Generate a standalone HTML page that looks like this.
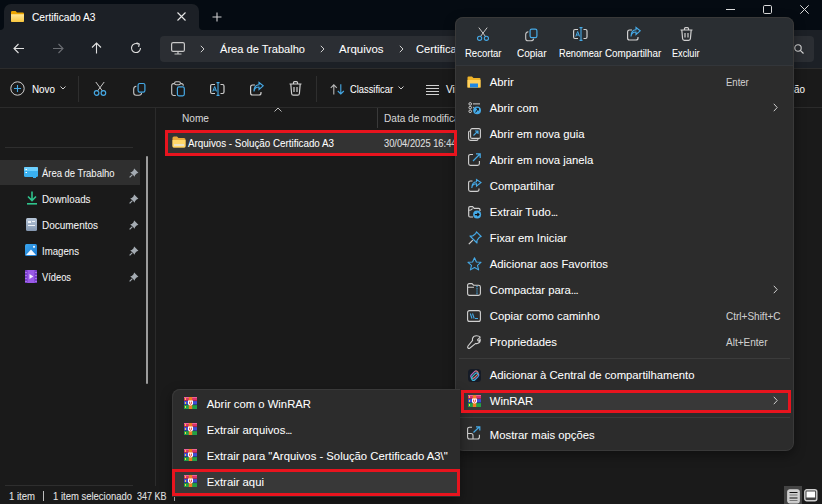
<!DOCTYPE html>
<html><head><meta charset="utf-8"><style>
html,body{margin:0;padding:0;width:822px;height:504px;overflow:hidden;background:#1a1a1a;}
body{position:relative;font-family:'Liberation Sans', sans-serif;}
.t{position:absolute;line-height:0;white-space:nowrap;-webkit-text-stroke:0.05px currentColor;}
svg{overflow:visible}
</style></head><body>
<div style="position:absolute;left:0px;top:0px;width:822px;height:30px;background:#050b12;"></div>
<div style="position:absolute;left:0px;top:25px;width:822px;height:5px;background:#1c2026;"></div>
<div style="position:absolute;left:0px;top:0px;width:4px;height:30px;background:#050b12;border-radius:0 0 4px 0"></div>
<div style="position:absolute;left:199px;top:0px;width:623px;height:30px;background:#050b12;border-radius:0 0 0 4px"></div>
<div style="position:absolute;left:4px;top:4px;width:195px;height:27px;background:#1c2026;border-radius:7px 7px 0 0"></div>
<div style="position:absolute;left:0px;top:30px;width:822px;height:39px;background:#1c2026;"></div>
<div style="position:absolute;left:0px;top:68px;width:822px;height:1px;background:#2c2c2c;"></div>
<div style="position:absolute;left:0px;top:69px;width:822px;height:38px;background:#1a1a1a;"></div>
<div style="position:absolute;left:0px;top:107px;width:822px;height:1px;background:#2b2b2b;"></div>
<svg style="position:absolute;left:11px;top:11px" width="13" height="11" viewBox="0 0 13 11"><defs><linearGradient id="fy" x1="0" y1="0" x2="0" y2="1"><stop offset="0" stop-color="#ffe79a"/><stop offset="1" stop-color="#f9c73e"/></linearGradient></defs><path d="M0 1.2 Q0 0 1.2 0 H4.6 L6 1.5 H11.8 Q13 1.5 13 2.7 V9.8 Q13 11 11.8 11 H1.2 Q0 11 0 9.8 Z" fill="#eaa400"/><path d="M0 3.2 H13 V9.8 Q13 11 11.8 11 H1.2 Q0 11 0 9.8 Z" fill="url(#fy)"/></svg>
<div class="t" style="left:32px;top:18.00px;font-size:10.3px;color:#ffffff;transform:scaleX(0.9905);transform-origin:0 0;">Certificado A3</div>
<svg style="position:absolute;left:177px;top:12px" width="9" height="9" viewBox="0 0 9 9"><path d="M0.5 0.5 L8.5 8.5 M8.5 0.5 L0.5 8.5" stroke="#e6e6e6" stroke-width="1.1"/></svg>
<svg style="position:absolute;left:212px;top:12px" width="10" height="10" viewBox="0 0 10 10"><path d="M5 0.5 V9.5 M0.5 5 H9.5" stroke="#d0d0d0" stroke-width="1.1"/></svg>
<svg style="position:absolute;left:726px;top:9px" width="9" height="2" viewBox="0 0 9 2"><path d="M0 0.5 H9" stroke="#dcdcdc" stroke-width="1"/></svg>
<svg style="position:absolute;left:763px;top:5px" width="9" height="9" viewBox="0 0 9 9"><rect x="0.5" y="0.5" width="8" height="8" rx="1.2" fill="none" stroke="#dcdcdc" stroke-width="1"/></svg>
<svg style="position:absolute;left:800px;top:5px" width="9" height="9" viewBox="0 0 9 9"><path d="M0.3 0.3 L8.7 8.7 M8.7 0.3 L0.3 8.7" stroke="#dcdcdc" stroke-width="1"/></svg>
<svg style="position:absolute;left:13px;top:43px" width="12" height="11" viewBox="0 0 12 11"><path d="M1 5.5 H11 M5.5 1 L1 5.5 L5.5 10" fill="none" stroke="#e0e0e0" stroke-width="1.1"/></svg>
<svg style="position:absolute;left:52px;top:43px" width="12" height="11" viewBox="0 0 12 11"><g transform="translate(12,0) scale(-1,1)"><path d="M1 5.5 H11 M5.5 1 L1 5.5 L5.5 10" fill="none" stroke="#6a6d72" stroke-width="1.1"/></g></svg>
<svg style="position:absolute;left:91px;top:42px" width="11" height="12" viewBox="0 0 11 12"><path d="M5.5 1 V11.5 M1 5.5 L5.5 1 L10 5.5" fill="none" stroke="#e0e0e0" stroke-width="1.1"/></svg>
<svg style="position:absolute;left:130px;top:42px" width="12" height="12" viewBox="0 0 12 12"><path d="M10.5 6 A4.5 4.5 0 1 1 8.5 2.3" fill="none" stroke="#e0e0e0" stroke-width="1.1"/><path d="M6.5 0.8 L9.3 2 L8.6 4.9" fill="none" stroke="#e0e0e0" stroke-width="1.1"/></svg>
<div style="position:absolute;left:160px;top:36px;width:640px;height:26px;background:#2b2e33;border-radius:4px"></div>
<div style="position:absolute;left:780px;top:36px;width:34px;height:26px;background:#2b2e33;border-radius:4px"></div>
<svg style="position:absolute;left:794px;top:44px" width="10" height="10" viewBox="0 0 10 10"><circle cx="4" cy="4" r="3.2" fill="none" stroke="#d8d8d8" stroke-width="1.1"/><path d="M6.3 6.3 L9.5 9.5" stroke="#d8d8d8" stroke-width="1.1"/></svg>
<svg style="position:absolute;left:171px;top:42px" width="14" height="13" viewBox="0 0 14 13"><rect x="0.6" y="0.6" width="12.8" height="8.8" rx="1.5" fill="none" stroke="#c8c8c8" stroke-width="1.2"/><path d="M7 9.5 V11.5 M3.5 12 H10.5" stroke="#c8c8c8" stroke-width="1.2"/></svg>
<svg style="position:absolute;left:200px;top:45px" width="5" height="8" viewBox="0 0 5 8"><path d="M0.8 0.8 L4 4 L0.8 7.2" fill="none" stroke="#cfcfcf" stroke-width="1"/></svg>
<div class="t" style="left:220px;top:49.12px;font-size:11.1px;color:#ffffff;transform:scaleX(0.9985);transform-origin:0 0;">Área de Trabalho</div>
<svg style="position:absolute;left:399px;top:45px" width="5" height="8" viewBox="0 0 5 8"><path d="M0.8 0.8 L4 4 L0.8 7.2" fill="none" stroke="#cfcfcf" stroke-width="1"/></svg>
<div class="t" style="left:338.5px;top:49.12px;font-size:11.1px;color:#ffffff;transform:scaleX(1.0308);transform-origin:0 0;">Arquivos</div>
<svg style="position:absolute;left:320px;top:45px" width="5" height="8" viewBox="0 0 5 8"><path d="M0.8 0.8 L4 4 L0.8 7.2" fill="none" stroke="#cfcfcf" stroke-width="1"/></svg>
<div class="t" style="left:416px;top:49.12px;font-size:11.1px;color:#ffffff;">Certificado A3</div>
<svg style="position:absolute;left:10px;top:81px" width="15" height="15" viewBox="0 0 15 15"><circle cx="7.5" cy="7.5" r="6.7" fill="none" stroke="#d0d0d0" stroke-width="1"/><path d="M7.5 4 V11 M4 7.5 H11" stroke="#45a9e6" stroke-width="1.1"/></svg>
<div class="t" style="left:31.5px;top:90.16px;font-size:10.4px;color:#ffffff;transform:scaleX(0.9478);transform-origin:0 0;">Novo</div>
<svg style="position:absolute;left:60px;top:86px" width="6" height="4" viewBox="0 0 6 4"><path d="M0.5 0.5 L3 3 L5.5 0.5" fill="none" stroke="#cfcfcf" stroke-width="1"/></svg>
<div style="position:absolute;left:78px;top:76px;width:1px;height:26px;background:#2e2e2e;"></div>
<svg style="position:absolute;left:93px;top:81px" width="14" height="15" viewBox="0 0 14 15"><path d="M2.8 1 L9.6 10.2 M11.2 1 L4.4 10.2" stroke="#c8c8c8" stroke-width="1"/><circle cx="3.6" cy="12" r="2.3" fill="none" stroke="#45a9e6" stroke-width="1.2"/><circle cx="10.4" cy="12" r="2.3" fill="none" stroke="#45a9e6" stroke-width="1.2"/></svg>
<svg style="position:absolute;left:133px;top:82px" width="13" height="14" viewBox="0 0 13 14"><rect x="5.1" y="1.5" width="6.8" height="8.6" rx="1.6" fill="none" stroke="#45a9e6" stroke-width="1.2"/><path d="M3.4 4.2 Q0.7 4.5 0.7 7 V10.8 Q0.7 13.2 3.2 13.2 H6 Q8.4 13.2 8.6 11" fill="none" stroke="#c8c8c8" stroke-width="1.1"/></svg>
<svg style="position:absolute;left:171px;top:81px" width="14" height="16" viewBox="0 0 14 16"><path d="M3.2 2.6 H2.6 Q0.7 2.6 0.7 4.6 V12.6 Q0.7 14.5 2.6 14.5 H4.8 M9.8 2.6 H10.4 Q12.3 2.6 12.3 4.6 V4.8" fill="none" stroke="#c8c8c8" stroke-width="1.1"/><rect x="3.6" y="0.7" width="5.8" height="3" rx="1.4" fill="none" stroke="#c8c8c8" stroke-width="1.1"/><rect x="6.4" y="5.9" width="6.9" height="8.9" rx="1.5" fill="none" stroke="#45a9e6" stroke-width="1.2"/></svg>
<svg style="position:absolute;left:210px;top:82px" width="15" height="14" viewBox="0 0 15 14"><path d="M5 2.5 H2 Q0.6 2.5 0.6 4 V10 Q0.6 11.5 2 11.5 H5 M10.5 2.5 H12.5 Q14 2.5 14 4 V10 Q14 11.5 12.5 11.5 H10.5" fill="none" stroke="#d0d0d0" stroke-width="1.2"/><path d="M8 0.5 V13.5 M6.5 0.6 H9.5 M6.5 13.4 H9.5" stroke="#45a9e6" stroke-width="1.1"/><path d="M2.8 9.5 L4.7 4.5 L6.6 9.5 M3.5 8 H6" fill="none" stroke="#45a9e6" stroke-width="1"/></svg>
<svg style="position:absolute;left:250px;top:82px" width="14" height="14" viewBox="0 0 14 14"><path d="M5 3 H2.5 Q0.6 3 0.6 5 V11 Q0.6 13 2.5 13 H9 Q11 13 11 11 V10" fill="none" stroke="#d0d0d0" stroke-width="1.2"/><path d="M4 9.5 Q4.5 5 9 5 V7.5 L13.2 3.8 L9 0.5 V2.8 Q4 3 4 9.5 Z" fill="none" stroke="#45a9e6" stroke-width="1.1"/></svg>
<svg style="position:absolute;left:289px;top:81px" width="13" height="15" viewBox="0 0 13 15"><path d="M0.5 3 H12.5 M4.5 3 V1.5 Q4.5 0.6 5.5 0.6 H7.5 Q8.5 0.6 8.5 1.5 V3 M1.8 3 L2.6 12.5 Q2.8 14.2 4.4 14.2 H8.6 Q10.2 14.2 10.4 12.5 L11.2 3 M5 6 V11 M8 6 V11" fill="none" stroke="#d0d0d0" stroke-width="1.2"/></svg>
<div style="position:absolute;left:316px;top:76px;width:1px;height:26px;background:#2e2e2e;"></div>
<svg style="position:absolute;left:330px;top:84px" width="15" height="11" viewBox="0 0 15 11"><path d="M3.8 10.5 V0.8 M0.8 3.8 L3.8 0.8 L6.8 3.8" fill="none" stroke="#b8b8b8" stroke-width="1.1"/><path d="M10.8 0.3 V10 M7.8 7 L10.8 10 L13.8 7" fill="none" stroke="#45a9e6" stroke-width="1.1"/></svg>
<div class="t" style="left:350px;top:90.16px;font-size:10.4px;color:#ffffff;transform:scaleX(0.8973);transform-origin:0 0;">Classificar</div>
<svg style="position:absolute;left:398px;top:86px" width="6" height="4" viewBox="0 0 6 4"><path d="M0.5 0.5 L3 3 L5.5 0.5" fill="none" stroke="#cfcfcf" stroke-width="1"/></svg>
<svg style="position:absolute;left:426px;top:84px" width="13" height="11" viewBox="0 0 13 11"><path d="M0 1.5 H13 M0 4.5 H13 M0 7.5 H13 M0 10.5 H13" stroke="#d0d0d0" stroke-width="1"/></svg>
<div class="t" style="left:445.5px;top:90.16px;font-size:10.4px;color:#ffffff;transform:scaleX(0.9808);transform-origin:0 0;">Visualizar</div>
<div class="t" style="left:794px;top:90.16px;font-size:10.4px;color:#ffffff;transform:scaleX(0.9514);transform-origin:0 0;">ão</div>
<div style="position:absolute;left:5px;top:147px;width:128px;height:1px;background:#2e2e2e;"></div>
<div style="position:absolute;left:0px;top:160px;width:140px;height:25px;background:#2f2f2f;"></div>
<div class="t" style="left:41.5px;top:173.70px;font-size:10.3px;color:#f4f4f4;transform:scaleX(0.9177);transform-origin:0 0;">Área de Trabalho</div>
<svg style="position:absolute;left:129px;top:168px" width="10" height="10" viewBox="0 0 10 10"><path d="M5.2 0.6 L9.4 4.8 L7.6 5.6 L6 7.2 L5.8 8.8 L1.2 4.2 L2.8 4 L4.4 2.4 Z" fill="#a4abb2"/><path d="M3.2 6.8 L0.6 9.4" stroke="#a4abb2" stroke-width="1.2"/></svg>
<div class="t" style="left:41.5px;top:199.70px;font-size:10.3px;color:#f4f4f4;transform:scaleX(0.9519);transform-origin:0 0;">Downloads</div>
<svg style="position:absolute;left:129px;top:194px" width="10" height="10" viewBox="0 0 10 10"><path d="M5.2 0.6 L9.4 4.8 L7.6 5.6 L6 7.2 L5.8 8.8 L1.2 4.2 L2.8 4 L4.4 2.4 Z" fill="#a4abb2"/><path d="M3.2 6.8 L0.6 9.4" stroke="#a4abb2" stroke-width="1.2"/></svg>
<div class="t" style="left:41.5px;top:225.70px;font-size:10.3px;color:#f4f4f4;transform:scaleX(0.9686);transform-origin:0 0;">Documentos</div>
<svg style="position:absolute;left:129px;top:220px" width="10" height="10" viewBox="0 0 10 10"><path d="M5.2 0.6 L9.4 4.8 L7.6 5.6 L6 7.2 L5.8 8.8 L1.2 4.2 L2.8 4 L4.4 2.4 Z" fill="#a4abb2"/><path d="M3.2 6.8 L0.6 9.4" stroke="#a4abb2" stroke-width="1.2"/></svg>
<div class="t" style="left:41.5px;top:251.70px;font-size:10.3px;color:#f4f4f4;transform:scaleX(0.9367);transform-origin:0 0;">Imagens</div>
<svg style="position:absolute;left:129px;top:246px" width="10" height="10" viewBox="0 0 10 10"><path d="M5.2 0.6 L9.4 4.8 L7.6 5.6 L6 7.2 L5.8 8.8 L1.2 4.2 L2.8 4 L4.4 2.4 Z" fill="#a4abb2"/><path d="M3.2 6.8 L0.6 9.4" stroke="#a4abb2" stroke-width="1.2"/></svg>
<div class="t" style="left:41.5px;top:277.69px;font-size:10.3px;color:#f4f4f4;transform:scaleX(0.9045);transform-origin:0 0;">Vídeos</div>
<svg style="position:absolute;left:129px;top:272px" width="10" height="10" viewBox="0 0 10 10"><path d="M5.2 0.6 L9.4 4.8 L7.6 5.6 L6 7.2 L5.8 8.8 L1.2 4.2 L2.8 4 L4.4 2.4 Z" fill="#a4abb2"/><path d="M3.2 6.8 L0.6 9.4" stroke="#a4abb2" stroke-width="1.2"/></svg>
<svg style="position:absolute;left:24px;top:167px" width="14" height="11" viewBox="0 0 14 11"><rect x="0" y="0" width="14" height="10" rx="1.5" fill="#3ab0f0"/><rect x="0" y="0" width="14" height="4" rx="1" fill="#6cd0ff"/><rect x="1.5" y="2" width="1.5" height="1" fill="#fff"/><rect x="1.5" y="5" width="1.5" height="1" fill="#fff"/><rect x="9" y="10" width="3" height="1" fill="#3ab0f0"/></svg>
<svg style="position:absolute;left:26px;top:191px" width="12" height="14" viewBox="0 0 12 14"><path d="M6 0.5 V9 M2 5.5 L6 9.5 L10 5.5" fill="none" stroke="#2fc48d" stroke-width="1.6"/><path d="M1 12.8 H11" stroke="#2fc48d" stroke-width="1.6"/></svg>
<svg style="position:absolute;left:26px;top:218px" width="11" height="13" viewBox="0 0 11 13"><defs><linearGradient id="dg" x1="0" y1="0" x2="0" y2="1"><stop offset="0" stop-color="#b7c6d8"/><stop offset="1" stop-color="#8497b0"/></linearGradient></defs><rect x="0" y="0" width="11" height="13" rx="1.5" fill="url(#dg)"/><rect x="2" y="3" width="3" height="2" fill="#eef2f7"/><path d="M2 7.5 H9 M6 3.5 H9" stroke="#eef2f7" stroke-width="1"/></svg>
<svg style="position:absolute;left:25px;top:244px" width="12" height="12" viewBox="0 0 12 12"><defs><linearGradient id="ig" x1="0" y1="0" x2="1" y2="1"><stop offset="0" stop-color="#3aa6ee"/><stop offset="1" stop-color="#1a78d0"/></linearGradient></defs><rect x="0" y="0" width="12" height="12" rx="1.5" fill="url(#ig)"/><path d="M1 11 L6 5.6 L11 11 Z" fill="#f2f8ff"/><circle cx="9" cy="2.8" r="1.1" fill="#e6f3ff"/></svg>
<svg style="position:absolute;left:25px;top:270px" width="12" height="13" viewBox="0 0 12 13"><rect x="0" y="0" width="12" height="13" rx="1.5" fill="#9a5ae8"/><rect x="0" y="0" width="2.6" height="13" rx="1" fill="#7a3ccc"/><rect x="9.4" y="0" width="2.6" height="13" rx="1" fill="#7a3ccc"/><path d="M1 2 V3 M1 5 V6 M1 8 V9 M1 11 V12 M11 2 V3 M11 5 V6 M11 8 V9 M11 11 V12" stroke="#d8c0ff" stroke-width="0.9"/><path d="M4.5 4 L8.3 6.5 L4.5 9 Z" fill="#f4eeff"/></svg>
<div style="position:absolute;left:146px;top:156px;width:2px;height:228px;background:#9c9c9c;border-radius:1px"></div>
<div style="position:absolute;left:155px;top:108px;width:1px;height:378px;background:#2b2b2b;"></div>
<div style="position:absolute;left:5px;top:485px;width:128px;height:1px;background:#2e2e2e;"></div>
<div class="t" style="left:9px;top:496.69px;font-size:10.3px;color:#e6e6e6;transform:scaleX(0.9270);transform-origin:0 0;">1 item</div>
<div style="position:absolute;left:43px;top:491px;width:1px;height:10px;background:#bdbdbd;"></div>
<div class="t" style="left:53px;top:496.69px;font-size:10.3px;color:#e6e6e6;transform:scaleX(0.9201);transform-origin:0 0;">1 item selecionado</div>
<div class="t" style="left:137px;top:496.69px;font-size:10.3px;color:#e6e6e6;transform:scaleX(0.8733);transform-origin:0 0;">347 KB</div>
<div style="position:absolute;left:174px;top:491px;width:1px;height:10px;background:#bdbdbd;"></div>
<div style="position:absolute;left:784px;top:486px;width:18px;height:18px;background:#444444;"></div>
<svg style="position:absolute;left:787px;top:489px" width="14" height="15" viewBox="0 0 14 15"><rect x="0.8" y="0.8" width="11.4" height="13" rx="2" fill="#cfcfcf" stroke="#cfcfcf" stroke-width="1.3"/><path d="M2.5 3.5 H10.5 M2.5 9 H10.5" stroke="#111" stroke-width="1"/><path d="M2.5 6 H10.5 M2.5 11.5 H10.5" stroke="#777" stroke-width="1"/></svg>
<svg style="position:absolute;left:804px;top:489px" width="14" height="13" viewBox="0 0 14 13"><rect x="0.8" y="0.8" width="12" height="11" rx="2" fill="#444" stroke="#cfcfcf" stroke-width="1.4"/><rect x="2.5" y="2.5" width="8.6" height="6" fill="#fff"/></svg>
<div class="t" style="left:181.5px;top:118.69px;font-size:10.3px;color:#d6d6d6;transform:scaleX(0.9829);transform-origin:0 0;">Nome</div>
<svg style="position:absolute;left:274px;top:107px" width="8" height="5" viewBox="0 0 8 5"><path d="M0.5 4.5 L4 1 L7.5 4.5" fill="none" stroke="#bdbdbd" stroke-width="1"/></svg>
<div style="position:absolute;left:377px;top:108px;width:1px;height:20px;background:#3a3a3a;"></div>
<div class="t" style="left:383.5px;top:118.69px;font-size:10.3px;color:#d6d6d6;transform:scaleX(0.9800);transform-origin:0 0;">Data de modificação</div>
<div style="position:absolute;left:167px;top:132px;width:288px;height:22px;background:#333333;"></div>
<svg style="position:absolute;left:172px;top:136px" width="14" height="12" viewBox="0 0 14 12"><path d="M0.5 2 Q0.5 0.5 2 0.5 H5 L6.5 2 H12 Q13.5 2 13.5 3.5 V10 Q13.5 11.5 12 11.5 H2 Q0.5 11.5 0.5 10 Z" fill="#e6a93a"/><path d="M0.5 4 H13.5 V10 Q13.5 11.5 12 11.5 H2 Q0.5 11.5 0.5 10 Z" fill="#ffd76a"/><rect x="2" y="8" width="10" height="2" fill="#e9e2c8"/></svg>
<div class="t" style="left:188px;top:144.16px;font-size:10.4px;color:#ffffff;transform:scaleX(0.9432);transform-origin:0 0;">Arquivos - Solução Certificado A3</div>
<div class="t" style="left:383.5px;top:144.16px;font-size:10.4px;color:#e0e0e0;transform:scaleX(0.8961);transform-origin:0 0;">30/04/2025 16:44</div>
<div style="position:absolute;left:455px;top:17px;width:339px;height:434px;background:#2c2c2c;border-radius:8px;box-shadow:0 4px 12px rgba(0,0,0,0.4);overflow:hidden"><div style="position:absolute;left:0;top:0;width:339px;height:48px;background:#2a2e32"></div><div style="position:absolute;left:0;top:48px;width:339px;height:1px;background:#33363a"></div><div style="position:absolute;left:0;top:0;width:337px;height:432px;border:1px solid #393939;border-radius:8px"></div></div>
<svg style="position:absolute;left:476px;top:27px" width="14" height="14" viewBox="0 0 14 14"><path d="M2.8 0.6 L9.6 9.6 M11.2 0.6 L4.4 9.6" stroke="#c8c8c8" stroke-width="1"/><circle cx="3.6" cy="11.3" r="2.1" fill="none" stroke="#45a9e6" stroke-width="1.1"/><circle cx="10.4" cy="11.3" r="2.1" fill="none" stroke="#45a9e6" stroke-width="1.1"/></svg>
<div class="t" style="left:465px;top:54.20px;font-size:10.3px;color:#ffffff;transform:scaleX(0.9244);transform-origin:0 0;">Recortar</div>
<svg style="position:absolute;left:525px;top:28px" width="13" height="14" viewBox="0 0 13 14"><rect x="5.1" y="1.1" width="6.8" height="8.6" rx="1.6" fill="none" stroke="#45a9e6" stroke-width="1.2"/><path d="M3.4 3.8 Q0.7 4.1 0.7 6.6 V10.4 Q0.7 12.8 3.2 12.8 H6 Q8.4 12.8 8.6 10.6" fill="none" stroke="#c8c8c8" stroke-width="1.1"/></svg>
<div class="t" style="left:517px;top:54.20px;font-size:10.3px;color:#ffffff;transform:scaleX(0.9722);transform-origin:0 0;">Copiar</div>
<svg style="position:absolute;left:573px;top:27px" width="15" height="14" viewBox="0 0 15 14"><path d="M5 2.5 H2 Q0.6 2.5 0.6 4 V10 Q0.6 11.5 2 11.5 H5 M10.5 2.5 H12.5 Q14 2.5 14 4 V10 Q14 11.5 12.5 11.5 H10.5" fill="none" stroke="#d0d0d0" stroke-width="1.2"/><path d="M8 0.5 V13.5 M6.5 0.6 H9.5 M6.5 13.4 H9.5" stroke="#45a9e6" stroke-width="1.1"/><path d="M2.8 9.5 L4.7 4.5 L6.6 9.5 M3.5 8 H6" fill="none" stroke="#45a9e6" stroke-width="1"/></svg>
<div class="t" style="left:558.7px;top:54.20px;font-size:10.3px;color:#ffffff;transform:scaleX(0.8944);transform-origin:0 0;">Renomear</div>
<svg style="position:absolute;left:627px;top:27px" width="14" height="14" viewBox="0 0 14 14"><path d="M5 3 H2.5 Q0.6 3 0.6 5 V11 Q0.6 13 2.5 13 H9 Q11 13 11 11 V10" fill="none" stroke="#d0d0d0" stroke-width="1.2"/><path d="M4 9.5 Q4.5 5 9 5 V7.5 L13.2 3.8 L9 0.5 V2.8 Q4 3 4 9.5 Z" fill="none" stroke="#45a9e6" stroke-width="1.1"/></svg>
<div class="t" style="left:604.8px;top:54.20px;font-size:10.3px;color:#ffffff;transform:scaleX(0.9533);transform-origin:0 0;">Compartilhar</div>
<svg style="position:absolute;left:680px;top:27px" width="13" height="14" viewBox="0 0 13 14"><path d="M0.5 3 H12.5 M4.5 3 V1.5 Q4.5 0.6 5.5 0.6 H7.5 Q8.5 0.6 8.5 1.5 V3 M1.8 3 L2.6 11.8 Q2.8 13.4 4.4 13.4 H8.6 Q10.2 13.4 10.4 11.8 L11.2 3 M5 6 V10.5 M8 6 V10.5" fill="none" stroke="#d0d0d0" stroke-width="1.2"/></svg>
<div class="t" style="left:672px;top:54.20px;font-size:10.3px;color:#ffffff;transform:scaleX(0.8898);transform-origin:0 0;">Excluir</div>
<div style="position:absolute;left:459px;top:358px;width:331px;height:1px;background:#3b3b3b;"></div>
<div style="position:absolute;left:459px;top:417px;width:331px;height:1px;background:#3b3b3b;"></div>
<div style="position:absolute;left:463px;top:392px;width:325px;height:20px;background:#383838;"></div>
<div class="t" style="left:489.8px;top:82.05px;font-size:11.3px;color:#ffffff;">Abrir</div>
<div class="t" style="left:726px;top:83.19px;font-size:10.3px;color:#cfcfcf;transform:scaleX(0.9259);transform-origin:0 0;">Enter</div>
<div class="t" style="left:489.8px;top:108.05px;font-size:11.3px;color:#ffffff;">Abrir com</div>
<svg style="position:absolute;left:773px;top:103px" width="5" height="9" viewBox="0 0 5 9"><path d="M0.8 0.8 L4.2 4.5 L0.8 8.2" fill="none" stroke="#cfcfcf" stroke-width="1"/></svg>
<div class="t" style="left:489.8px;top:134.04px;font-size:11.3px;color:#ffffff;">Abrir em nova guia</div>
<div class="t" style="left:489.8px;top:160.04px;font-size:11.3px;color:#ffffff;">Abrir em nova janela</div>
<div class="t" style="left:489.8px;top:186.04px;font-size:11.3px;color:#ffffff;">Compartilhar</div>
<div class="t" style="left:489.8px;top:212.04px;font-size:11.3px;color:#ffffff;">Extrair Tudo<span style="letter-spacing:-1px">...</span></div>
<div class="t" style="left:489.8px;top:238.04px;font-size:11.3px;color:#ffffff;">Fixar em Iniciar</div>
<div class="t" style="left:489.8px;top:264.05px;font-size:11.3px;color:#ffffff;">Adicionar aos Favoritos</div>
<div class="t" style="left:489.8px;top:290.05px;font-size:11.3px;color:#ffffff;">Compactar para<span style="letter-spacing:-0.8px">...</span></div>
<svg style="position:absolute;left:773px;top:285px" width="5" height="9" viewBox="0 0 5 9"><path d="M0.8 0.8 L4.2 4.5 L0.8 8.2" fill="none" stroke="#cfcfcf" stroke-width="1"/></svg>
<div class="t" style="left:489.8px;top:316.05px;font-size:11.3px;color:#ffffff;">Copiar como caminho</div>
<div class="t" style="left:726px;top:317.19px;font-size:10.3px;color:#cfcfcf;transform:scaleX(0.9716);transform-origin:0 0;">Ctrl+Shift+C</div>
<div class="t" style="left:489.8px;top:342.05px;font-size:11.3px;color:#ffffff;">Propriedades</div>
<div class="t" style="left:726px;top:343.19px;font-size:10.3px;color:#cfcfcf;transform:scaleX(0.9733);transform-origin:0 0;">Alt+Enter</div>
<div class="t" style="left:489.8px;top:375.05px;font-size:11.3px;color:#ffffff;">Adicionar à Central de compartilhamento</div>
<div class="t" style="left:489.8px;top:400.55px;font-size:11.3px;color:#ffffff;">WinRAR</div>
<svg style="position:absolute;left:773px;top:395.5px" width="5" height="9" viewBox="0 0 5 9"><path d="M0.8 0.8 L4.2 4.5 L0.8 8.2" fill="none" stroke="#cfcfcf" stroke-width="1"/></svg>
<div class="t" style="left:489.8px;top:434.55px;font-size:11.3px;color:#ffffff;">Mostrar mais opções</div>
<svg style="position:absolute;left:467px;top:76px" width="14" height="12" viewBox="0 0 14 12"><path d="M0.5 1.5 Q0.5 0.5 1.5 0.5 H5 L6.5 2 H12.5 Q13.5 2 13.5 3 V11 Q13.5 11.5 13 11.5 H1 Q0.5 11.5 0.5 11 Z" fill="#f0b429"/><path d="M0.5 4 H13.5 V11.5 H0.5 Z" fill="#ffd15c"/><rect x="3" y="7.5" width="8" height="4" fill="#1e88e5"/></svg>
<svg style="position:absolute;left:468px;top:102px" width="14" height="13" viewBox="0 0 14 13"><circle cx="2.2" cy="1.9" r="1.3" fill="none" stroke="#d0d0d0" stroke-width="1"/><circle cx="2.2" cy="5.6" r="1.3" fill="none" stroke="#d0d0d0" stroke-width="1"/><circle cx="2.2" cy="9.3" r="1.3" fill="none" stroke="#d0d0d0" stroke-width="1"/><path d="M5 1.9 H12 M5 5.4 H5.8" stroke="#d0d0d0" stroke-width="1"/><circle cx="9.1" cy="8.3" r="3.9" fill="#45a9e6"/><path d="M7.6 10.4 L10.2 6.6 M8.4 6.4 H10.4 V8.6" stroke="#111" stroke-width="1" fill="none"/></svg>
<svg style="position:absolute;left:468px;top:128px" width="13" height="13" viewBox="0 0 13 13"><rect x="2.6" y="0.6" width="9.8" height="9.8" rx="1.5" fill="none" stroke="#d0d0d0" stroke-width="1.1"/><path d="M2 3 Q0.6 3 0.6 4.5 V10.5 Q0.6 12.4 2.5 12.4 H8.5 Q10 12.4 10 11" fill="none" stroke="#d0d0d0" stroke-width="1.1"/><path d="M5.5 7.5 L10 3 M7 3 H10 V6" fill="none" stroke="#45a9e6" stroke-width="1.1"/></svg>
<svg style="position:absolute;left:468px;top:153px" width="13" height="13" viewBox="0 0 13 13"><path d="M5 1.5 H2.5 Q0.6 1.5 0.6 3.5 V10.5 Q0.6 12.4 2.5 12.4 H9.5 Q11.4 12.4 11.4 10.5 V8" fill="none" stroke="#d0d0d0" stroke-width="1.1"/><path d="M5 8 L12 1 M8 0.8 H12.2 V5" fill="none" stroke="#45a9e6" stroke-width="1.2"/></svg>
<svg style="position:absolute;left:468px;top:179px" width="14" height="13" viewBox="0 0 14 13"><path d="M4.5 2 H2.5 Q0.6 2 0.6 4 V10.5 Q0.6 12.4 2.5 12.4 H9 Q11 12.4 11 10.5 V9.5" fill="none" stroke="#d0d0d0" stroke-width="1.1"/><path d="M3.8 9 Q4.2 4.8 8.5 4.8 V7.2 L13 3.5 L8.5 0.6 V2.7 Q3.8 3 3.8 9 Z" fill="none" stroke="#45a9e6" stroke-width="1.1"/></svg>
<svg style="position:absolute;left:468px;top:206px" width="14" height="13" viewBox="0 0 14 13"><path d="M5 11 H2 Q0.7 11 0.7 9.6 V2 Q0.7 0.7 2 0.7 H4.6 L6.2 2.4 H10.6 Q12 2.4 12 3.8 V5" fill="none" stroke="#d0d0d0" stroke-width="1.2"/><path d="M0.7 4.3 Q3 4.3 4.6 2.6" fill="none" stroke="#d0d0d0" stroke-width="1.1"/><circle cx="9.1" cy="8.6" r="4" fill="#45a9e6"/><path d="M6.9 8.6 H11 M9.4 7 L11 8.6 L9.4 10.2" stroke="#111" stroke-width="1.1" fill="none"/></svg>
<svg style="position:absolute;left:468px;top:231px" width="14" height="14" viewBox="0 0 14 14"><path d="M8.5 0.8 L13.2 5.5 L11.5 6.2 L9 9.3 L9 12 L2 5 L4.7 5 L7.8 2.5 Z" fill="none" stroke="#45a9e6" stroke-width="1.1" stroke-linejoin="round"/><path d="M4.8 9.2 L0.8 13.2" stroke="#d0d0d0" stroke-width="1.2"/></svg>
<svg style="position:absolute;left:467px;top:257px" width="15" height="14" viewBox="0 0 15 14"><path d="M7.5 0.8 L9.4 5 L14 5.3 L10.5 8.3 L11.6 12.9 L7.5 10.5 L3.4 12.9 L4.5 8.3 L1 5.3 L5.6 5 Z" fill="none" stroke="#45a9e6" stroke-width="1.1" stroke-linejoin="round"/></svg>
<svg style="position:absolute;left:467px;top:283px" width="14" height="13" viewBox="0 0 14 13"><path d="M2.3 0.6 H5 L6.5 2.2 H11.5 Q13.4 2.2 13.4 4 V10.5 Q13.4 12.4 11.5 12.4 H2.5 Q0.6 12.4 0.6 10.5 V2.3 Q0.6 0.6 2.3 0.6 Z M0.6 4.2 H7" fill="none" stroke="#d0d0d0" stroke-width="1.1"/><path d="M10 3 V12" stroke="#45a9e6" stroke-width="1.3" stroke-dasharray="1.2 1"/></svg>
<svg style="position:absolute;left:467px;top:310px" width="14" height="12" viewBox="0 0 14 12"><rect x="0.6" y="0.6" width="12.8" height="10.8" rx="2" fill="none" stroke="#d0d0d0" stroke-width="1.1"/><path d="M3.3 3.5 L5 8.5 M5.5 3.5 L7.2 8.5 M8 8.5 H11" stroke="#45a9e6" stroke-width="1.1"/></svg>
<svg style="position:absolute;left:467px;top:335px" width="14" height="14" viewBox="0 0 14 14"><path d="M9.5 0.8 Q12 0.8 13.2 2.2 L10.5 4.8 L11 5.8 L12 6.3 L13.2 4 Q13.8 7.5 10.5 8.5 Q9.5 8.7 8.7 8.4 L3 13 Q1.8 13.8 1 13 Q0.2 12.2 1 11 L5.6 5.3 Q5.3 4.5 5.5 3.5 Q6.3 0.8 9.5 0.8 Z" fill="none" stroke="#d0d0d0" stroke-width="1.1" stroke-linejoin="round"/></svg>
<svg style="position:absolute;left:468px;top:369px" width="13" height="13" viewBox="0 0 13 13"><defs><linearGradient id="g1" x1="0" y1="0" x2="1" y2="1"><stop offset="0" stop-color="#b06ae8"/><stop offset="1" stop-color="#e8804a"/></linearGradient><linearGradient id="g2" x1="0" y1="0" x2="1" y2="1"><stop offset="0" stop-color="#2ad0c0"/><stop offset="1" stop-color="#5a8ef0"/></linearGradient></defs><rect x="0" y="0" width="13" height="13" rx="3.5" fill="#151b26"/><rect x="2.2" y="3.6" width="8.5" height="4.2" rx="2" transform="rotate(-45 6.45 5.7)" fill="none" stroke="url(#g1)" stroke-width="1.2"/><rect x="2.8" y="5.6" width="8.5" height="4.2" rx="2" transform="rotate(-45 7.05 7.7)" fill="none" stroke="url(#g2)" stroke-width="1.2"/></svg>
<svg style="position:absolute;left:468px;top:395px" width="13" height="12" viewBox="0 0 13 12"><rect x="0" y="0" width="13" height="4" fill="#d8336b"/><rect x="0" y="0" width="13" height="1" fill="#f0609a"/><rect x="0" y="4" width="13" height="4" fill="#3f4fd6"/><rect x="0" y="8" width="13" height="4" fill="#22a046"/><rect x="0" y="3.6" width="13" height="0.5" fill="#5a1830"/><rect x="0" y="7.6" width="13" height="0.5" fill="#102a20"/><rect x="4.8" y="0" width="3.4" height="12" fill="#f07a22"/><path d="M4 3.6 H9 V6.5 Q9 8.4 6.5 8.4 Q4 8.4 4 6.5 Z" fill="#ffffff"/><path d="M5.6 4.6 V6.4 Q5.6 7.3 6.5 7.3 Q7.4 7.3 7.4 6.4 V4.6" fill="none" stroke="#e03020" stroke-width="0.9"/><rect x="1" y="1" width="1" height="2" fill="#f5c842"/><rect x="1" y="5" width="1" height="2" fill="#f5c842"/><rect x="1" y="9" width="1" height="2" fill="#f5d842"/></svg>
<svg style="position:absolute;left:467px;top:426px" width="14" height="14" viewBox="0 0 14 14"><path d="M5 1.2 H2.5 Q0.6 1.2 0.6 3 V11 Q0.6 13 2.5 13 H10.5 Q12.4 13 12.4 11 V8.8 M0.6 7.5 H4 Q6 7.5 6 9.5 V13" fill="none" stroke="#d0d0d0" stroke-width="1.1"/><path d="M6.5 6.5 L12.5 0.8 M9 0.8 H12.8 V4.5" fill="none" stroke="#45a9e6" stroke-width="1.2"/></svg>
<div style="position:absolute;left:172px;top:389px;width:288px;height:108px;background:#2c2c2c;border-radius:8px 0 0 0;box-shadow:0 4px 12px rgba(0,0,0,0.4)"><div style="position:absolute;left:0;top:0;width:287px;height:107px;border:1px solid #393939;border-right:0;border-bottom:0;border-radius:8px 0 0 0"></div></div>
<div style="position:absolute;left:174px;top:471px;width:284px;height:22px;background:#383838;"></div>
<div class="t" style="left:206.8px;top:403.55px;font-size:11.3px;color:#ffffff;">Abrir com o WinRAR</div>
<svg style="position:absolute;left:184px;top:396.5px" width="13" height="12" viewBox="0 0 13 12"><rect x="0" y="0" width="13" height="4" fill="#d8336b"/><rect x="0" y="0" width="13" height="1" fill="#f0609a"/><rect x="0" y="4" width="13" height="4" fill="#3f4fd6"/><rect x="0" y="8" width="13" height="4" fill="#22a046"/><rect x="0" y="3.6" width="13" height="0.5" fill="#5a1830"/><rect x="0" y="7.6" width="13" height="0.5" fill="#102a20"/><rect x="4.8" y="0" width="3.4" height="12" fill="#f07a22"/><path d="M4 3.6 H9 V6.5 Q9 8.4 6.5 8.4 Q4 8.4 4 6.5 Z" fill="#ffffff"/><path d="M5.6 4.6 V6.4 Q5.6 7.3 6.5 7.3 Q7.4 7.3 7.4 6.4 V4.6" fill="none" stroke="#e03020" stroke-width="0.9"/><rect x="1" y="1" width="1" height="2" fill="#f5c842"/><rect x="1" y="5" width="1" height="2" fill="#f5c842"/><rect x="1" y="9" width="1" height="2" fill="#f5d842"/></svg>
<div class="t" style="left:206.8px;top:429.55px;font-size:11.3px;color:#ffffff;">Extrair arquivos<span style="letter-spacing:-1.2px">...</span></div>
<svg style="position:absolute;left:184px;top:422.5px" width="13" height="12" viewBox="0 0 13 12"><rect x="0" y="0" width="13" height="4" fill="#d8336b"/><rect x="0" y="0" width="13" height="1" fill="#f0609a"/><rect x="0" y="4" width="13" height="4" fill="#3f4fd6"/><rect x="0" y="8" width="13" height="4" fill="#22a046"/><rect x="0" y="3.6" width="13" height="0.5" fill="#5a1830"/><rect x="0" y="7.6" width="13" height="0.5" fill="#102a20"/><rect x="4.8" y="0" width="3.4" height="12" fill="#f07a22"/><path d="M4 3.6 H9 V6.5 Q9 8.4 6.5 8.4 Q4 8.4 4 6.5 Z" fill="#ffffff"/><path d="M5.6 4.6 V6.4 Q5.6 7.3 6.5 7.3 Q7.4 7.3 7.4 6.4 V4.6" fill="none" stroke="#e03020" stroke-width="0.9"/><rect x="1" y="1" width="1" height="2" fill="#f5c842"/><rect x="1" y="5" width="1" height="2" fill="#f5c842"/><rect x="1" y="9" width="1" height="2" fill="#f5d842"/></svg>
<div class="t" style="left:206.8px;top:456.05px;font-size:11.3px;color:#ffffff;">Extrair para "Arquivos - Solução Certificado A3\"</div>
<svg style="position:absolute;left:184px;top:449px" width="13" height="12" viewBox="0 0 13 12"><rect x="0" y="0" width="13" height="4" fill="#d8336b"/><rect x="0" y="0" width="13" height="1" fill="#f0609a"/><rect x="0" y="4" width="13" height="4" fill="#3f4fd6"/><rect x="0" y="8" width="13" height="4" fill="#22a046"/><rect x="0" y="3.6" width="13" height="0.5" fill="#5a1830"/><rect x="0" y="7.6" width="13" height="0.5" fill="#102a20"/><rect x="4.8" y="0" width="3.4" height="12" fill="#f07a22"/><path d="M4 3.6 H9 V6.5 Q9 8.4 6.5 8.4 Q4 8.4 4 6.5 Z" fill="#ffffff"/><path d="M5.6 4.6 V6.4 Q5.6 7.3 6.5 7.3 Q7.4 7.3 7.4 6.4 V4.6" fill="none" stroke="#e03020" stroke-width="0.9"/><rect x="1" y="1" width="1" height="2" fill="#f5c842"/><rect x="1" y="5" width="1" height="2" fill="#f5c842"/><rect x="1" y="9" width="1" height="2" fill="#f5d842"/></svg>
<div class="t" style="left:206.8px;top:481.55px;font-size:11.3px;color:#ffffff;">Extrair aqui</div>
<svg style="position:absolute;left:184px;top:474.5px" width="13" height="12" viewBox="0 0 13 12"><rect x="0" y="0" width="13" height="4" fill="#d8336b"/><rect x="0" y="0" width="13" height="1" fill="#f0609a"/><rect x="0" y="4" width="13" height="4" fill="#3f4fd6"/><rect x="0" y="8" width="13" height="4" fill="#22a046"/><rect x="0" y="3.6" width="13" height="0.5" fill="#5a1830"/><rect x="0" y="7.6" width="13" height="0.5" fill="#102a20"/><rect x="4.8" y="0" width="3.4" height="12" fill="#f07a22"/><path d="M4 3.6 H9 V6.5 Q9 8.4 6.5 8.4 Q4 8.4 4 6.5 Z" fill="#ffffff"/><path d="M5.6 4.6 V6.4 Q5.6 7.3 6.5 7.3 Q7.4 7.3 7.4 6.4 V4.6" fill="none" stroke="#e03020" stroke-width="0.9"/><rect x="1" y="1" width="1" height="2" fill="#f5c842"/><rect x="1" y="5" width="1" height="2" fill="#f5c842"/><rect x="1" y="9" width="1" height="2" fill="#f5d842"/></svg>
<div style="position:absolute;left:165px;top:130px;width:286px;height:20px;border:3px solid #e8141e"></div>
<div style="position:absolute;left:461px;top:390px;width:324px;height:17px;border:3px solid #e8141e"></div>
<div style="position:absolute;left:172px;top:469px;width:282px;height:21px;border:3px solid #e8141e"></div>
</body></html>
